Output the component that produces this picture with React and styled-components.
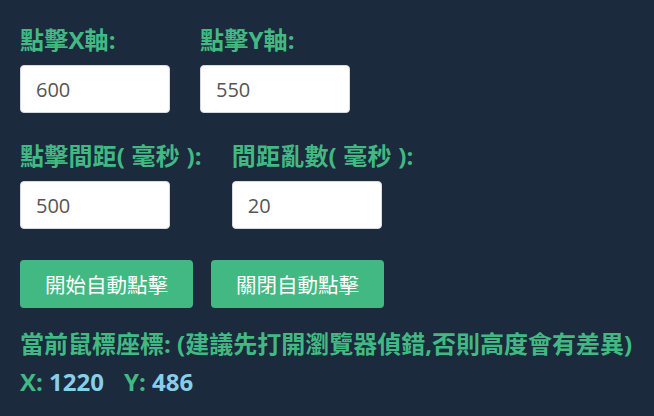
import React, { useState } from "react";
import styled, { createGlobalStyle } from "styled-components";

const GlobalStyle = createGlobalStyle`
  html, body {
    margin: 0;
    padding: 0;
    background-color: #1b2a3c;
  }
  * {
    box-sizing: border-box;
  }
`;

const Page = styled.div`
  width: 654px;
  height: 416px;
  background-color: #1b2a3c;
  padding: 24px 20px 0 20px;
  font-family: "Open Sans", "Noto Sans CJK TC", sans-serif;
  overflow: hidden;
`;

const Row = styled.div`
  display: flex;
  gap: 30px;
  margin-bottom: ${(props) => props.$spacing || 0}px;
`;

const Field = styled.div`
  display: flex;
  flex-direction: column;
`;

const Label = styled.label`
  font-size: 24px;
  line-height: 32px;
  font-weight: 700;
  letter-spacing: 0.2px;
  color: #42b983;
  white-space: nowrap;
  margin-bottom: 9px;
`;

const Input = styled.input`
  width: 150px;
  height: 48px;
  padding: 0 15px;
  border: 1px solid #d6d9e0;
  border-radius: 4px;
  background: #fff;
  font-family: "Open Sans", sans-serif;
  font-size: 20px;
  color: #555;
  outline: none;
`;

const Buttons = styled.div`
  display: flex;
  gap: 18px;
  margin-bottom: 20px;
`;

const Button = styled.button`
  height: 48px;
  padding: 0 25px;
  border: none;
  border-radius: 4px;
  background-color: #42b983;
  color: #fff;
  font-family: "Noto Sans CJK TC", sans-serif;
  font-size: 20.5px;
  cursor: pointer;
`;

const Heading = styled.div`
  font-size: 24px;
  line-height: 32px;
  font-weight: 700;
  color: #42b983;
  white-space: nowrap;
  margin-bottom: 6px;
`;

const Coords = styled.div`
  display: flex;
  gap: 20px;
  font-size: 24px;
  line-height: 32px;
  font-weight: 700;
  color: #42b983;
`;

const Value = styled.span`
  color: #87ceeb;
`;

const InputField = ({ label, value, onChange }) => (
  <Field>
    <Label>{label}</Label>
    <Input value={value} onChange={(e) => onChange(e.target.value)} />
  </Field>
);

const App = () => {
  const [x, setX] = useState("600");
  const [y, setY] = useState("550");
  const [interval, setInterval] = useState("500");
  const [random, setRandom] = useState("20");

  return (
    <>
      <GlobalStyle />
      <Page>
        <Row $spacing={27}>
          <InputField label="點擊X軸:" value={x} onChange={setX} />
          <InputField label="點擊Y軸:" value={y} onChange={setY} />
        </Row>
        <Row $spacing={31}>
          <InputField label="點擊間距( 毫秒 ):" value={interval} onChange={setInterval} />
          <InputField label="間距亂數( 毫秒 ):" value={random} onChange={setRandom} />
        </Row>
        <Buttons>
          <Button>開始自動點擊</Button>
          <Button>關閉自動點擊</Button>
        </Buttons>
        <Heading>當前鼠標座標: (建議先打開瀏覽器偵錯,否則高度會有差異)</Heading>
        <Coords>
          <span>X: <Value>1220</Value></span>
          <span>Y: <Value>486</Value></span>
        </Coords>
      </Page>
    </>
  );
};

export default App;
